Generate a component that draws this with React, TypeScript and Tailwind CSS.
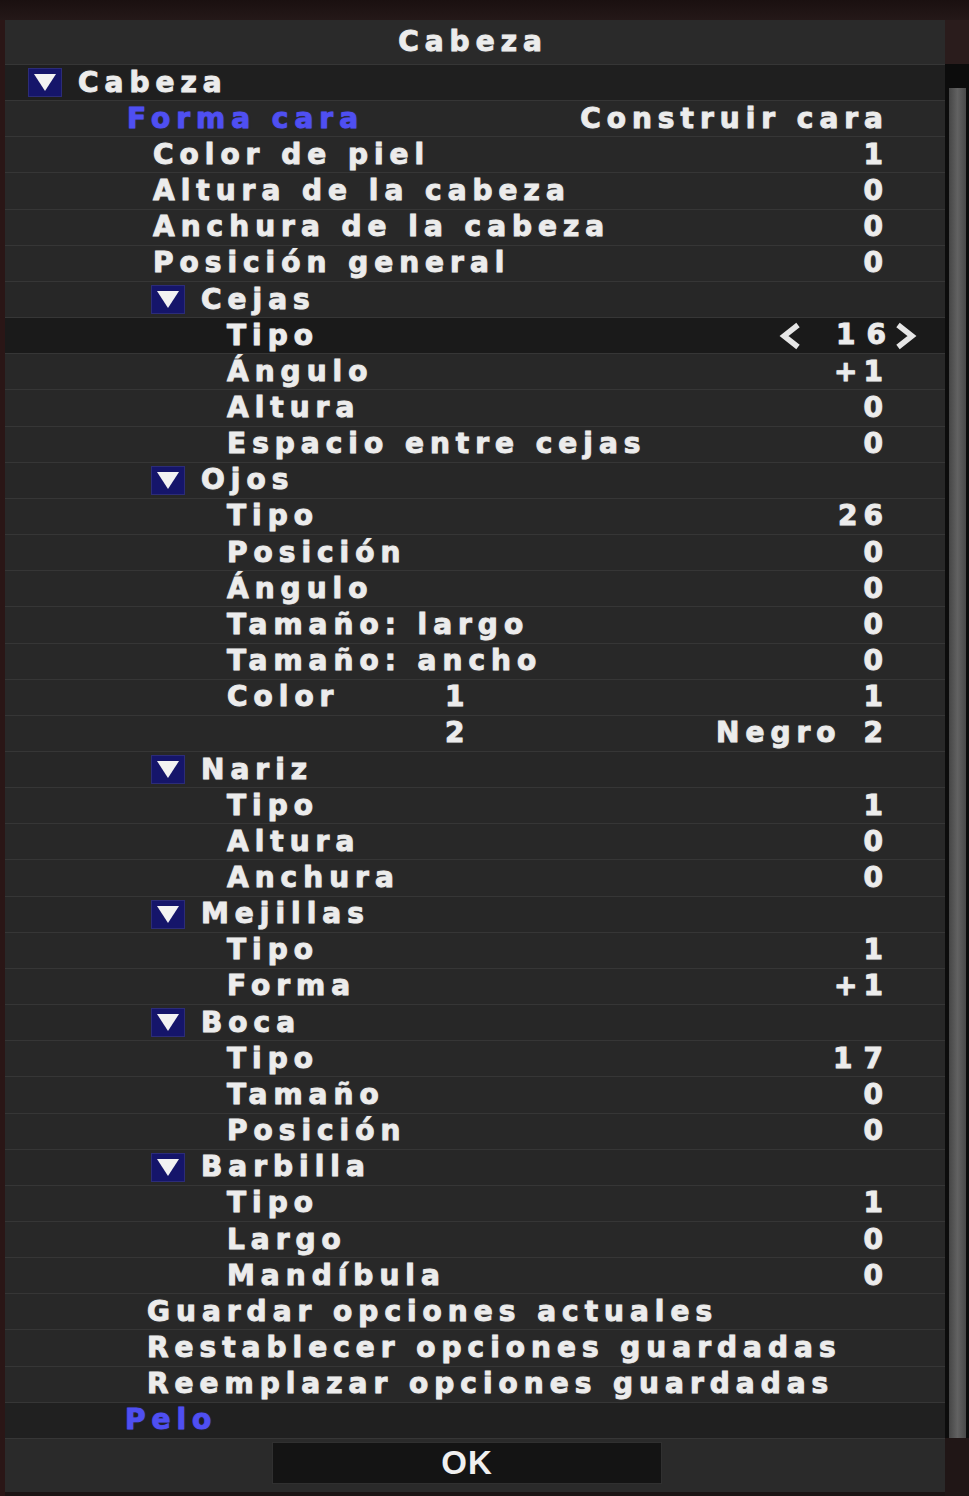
import React from "react";

type Row =
	| { kind: "head"; label: string; level: 0 | 1 }
	| { kind: "item"; label: string; value?: string; level: 1 | 2 | 3; mid?: string; dark?: boolean; arrows?: boolean }
	| { kind: "link"; label: string; right?: string; level: 0 | 1 };

const rows: Row[] = [
	{ kind: "head", label: "Cabeza", level: 0 },
	{ kind: "link", label: "Forma cara", right: "Construir cara", level: 1 },
	{ kind: "item", label: "Color de piel", value: "1", level: 1 },
	{ kind: "item", label: "Altura de la cabeza", value: "0", level: 1 },
	{ kind: "item", label: "Anchura de la cabeza", value: "0", level: 1 },
	{ kind: "item", label: "Posición general", value: "0", level: 1 },
	{ kind: "head", label: "Cejas", level: 1 },
	{ kind: "item", label: "Tipo", value: "16", level: 2, dark: true, arrows: true },
	{ kind: "item", label: "Ángulo", value: "+1", level: 2 },
	{ kind: "item", label: "Altura", value: "0", level: 2 },
	{ kind: "item", label: "Espacio entre cejas", value: "0", level: 2 },
	{ kind: "head", label: "Ojos", level: 1 },
	{ kind: "item", label: "Tipo", value: "26", level: 2 },
	{ kind: "item", label: "Posición", value: "0", level: 2 },
	{ kind: "item", label: "Ángulo", value: "0", level: 2 },
	{ kind: "item", label: "Tamaño: largo", value: "0", level: 2 },
	{ kind: "item", label: "Tamaño: ancho", value: "0", level: 2 },
	{ kind: "item", label: "Color", mid: "1", value: "1", level: 2 },
	{ kind: "item", label: "", mid: "2", value: "Negro|2", level: 2 },
	{ kind: "head", label: "Nariz", level: 1 },
	{ kind: "item", label: "Tipo", value: "1", level: 2 },
	{ kind: "item", label: "Altura", value: "0", level: 2 },
	{ kind: "item", label: "Anchura", value: "0", level: 2 },
	{ kind: "head", label: "Mejillas", level: 1 },
	{ kind: "item", label: "Tipo", value: "1", level: 2 },
	{ kind: "item", label: "Forma", value: "+1", level: 2 },
	{ kind: "head", label: "Boca", level: 1 },
	{ kind: "item", label: "Tipo", value: "17", level: 2 },
	{ kind: "item", label: "Tamaño", value: "0", level: 2 },
	{ kind: "item", label: "Posición", value: "0", level: 2 },
	{ kind: "head", label: "Barbilla", level: 1 },
	{ kind: "item", label: "Tipo", value: "1", level: 2 },
	{ kind: "item", label: "Largo", value: "0", level: 2 },
	{ kind: "item", label: "Mandíbula", value: "0", level: 2 },
	{ kind: "item", label: "Guardar opciones actuales", level: 3 },
	{ kind: "item", label: "Restablecer opciones guardadas", level: 3 },
	{ kind: "item", label: "Reemplazar opciones guardadas", level: 3 },
	{ kind: "link", label: "Pelo", level: 0 },
];

// wide game-menu lettering
const font =
	"font-['DejaVu_Sans',_'Liberation_Sans',_sans-serif] font-bold text-[28px] tracking-[6px] whitespace-pre leading-none";
const white = "text-[#ececec] [-webkit-text-stroke:0.9px_#ececec] [text-shadow:0_0_2px_rgba(255,255,255,0.35)]";
const blue = "text-[#4f4ff2] [-webkit-text-stroke:0.9px_#4f4ff2] [text-shadow:0_0_2px_rgba(80,80,255,0.5)]";

const Toggle = () => (
	<span className="flex h-[29px] w-[34px] items-center justify-center border border-[#2c2c78] bg-[#15156a]">
		<svg width="24" height="19" viewBox="0 0 24 19">
			<path d="M1 1 H23 L12 18 Z" fill="#f2f2f2" />
		</svg>
	</span>
);

const Chevron = ({ dir }: { dir: "l" | "r" }) => (
	<svg width="24" height="28" viewBox="0 0 24 28">
		<path
			d={dir === "l" ? "M20 3 L6 14 L20 25" : "M4 3 L18 14 L4 25"}
			fill="none"
			stroke="#e6e6e6"
			strokeWidth="5.5"
		/>
	</svg>
);

const Value = ({ v }: { v: string }) => {
	// the "1" in two-digit values sits at the left of a wide cell
	const wide = v.length === 2 && v[0] === "1";
	return (
		<span className={`${font} ${white} ${wide ? "tracking-[11px] -mr-[5px]" : ""}`}>{v}</span>
	);
};

const RowView = ({ row }: { row: Row }) => {
	const base = "flex h-[36.16px] items-center border-t border-[#363636]";
	if (row.kind === "head") {
		return (
			<div className={`${base} ${row.level === 0 ? "bg-[#1f1f1f] pl-[23px]" : "bg-[#272727] pl-[146px]"}`}>
				<Toggle />
				<span className={`${font} ${white} ml-[16px]`}>{row.label}</span>
			</div>
		);
	}
	if (row.kind === "link") {
		return (
			<div
				className={`${base} justify-between pr-[56px] ${
					row.level === 0 ? "bg-[#202020] pl-[120px]" : "bg-[#282828] pl-[122px]"
				}`}
			>
				<span className={`${font} ${blue}`}>{row.label}</span>
				{row.right && <span className={`${font} ${white}`}>{row.right}</span>}
			</div>
		);
	}
	const pl = row.level === 1 ? "pl-[148px]" : row.level === 2 ? "pl-[222px]" : "pl-[142px]";
	const [v1, v2] = (row.value ?? "").split("|");
	return (
		<div
			className={`${base} justify-between ${pl} ${
				row.dark ? "bg-[#1a1a1a] pr-[27px]" : "bg-[#282828] pr-[56px]"
			}`}
		>
			<div className="flex items-center">
				{row.mid !== undefined ? (
					<>
						<span className={`${font} ${white} w-[218px]`}>{row.label}</span>
						<span className={`${font} ${white}`}>{row.mid}</span>
					</>
				) : (
					<span className={`${font} ${white}`}>{row.label}</span>
				)}
			</div>
			{row.arrows ? (
				<div className="flex items-center">
					<Chevron dir="l" />
					<span className="ml-[34px]">
						<Value v={v1} />
					</span>
					<span className="ml-[2px]">
						<Chevron dir="r" />
					</span>
				</div>
			) : v2 !== undefined ? (
				<div className="flex items-center">
					<span className={`${font} ${white}`}>{v1}</span>
					<span className={`${font} ${white} ml-[22px]`}>{v2}</span>
				</div>
			) : (
				<Value v={v1} />
			)}
		</div>
	);
};

export default function App() {
	return (
		<div className="flex h-[1496px] w-[969px] flex-col bg-[#1c1414]">
			<div className="h-[20px] bg-gradient-to-b from-[#1a1010] to-[#241818]" />
			<div className="flex flex-1">
				<div className="w-[5px] bg-[#2a1616]" />
				<div className="flex w-[940px] flex-col">
					<div className="flex h-[44px] items-center justify-center bg-[#2a2a2a] pr-[4px]">
						<span className={`${font} ${white}`}>Cabeza</span>
					</div>
					{rows.map((row, i) => (
						<RowView key={i} row={row} />
					))}
					<div className="flex h-[54px] items-start justify-center border-t border-[#363636] bg-[#2a2a2a] pr-[16px] pt-[3px]">
						<button className="flex h-[42px] w-[390px] items-center justify-center border border-[#303030] bg-[#141414] font-['Liberation_Sans',_Arial,_sans-serif] text-[33px] font-bold tracking-[1px] text-[#f0f0f0]">
							OK
						</button>
					</div>
				</div>
				<div className="flex w-[24px] flex-col">
					<div className="h-[44px] bg-[#2a1c1c]" />
					<div className="flex h-[1374px] bg-[#0c0c0c] pl-[4px]">
						<div className="mt-[24px] w-[17px] bg-gradient-to-r from-[#464646] via-[#626262] to-[#4a4a4a]" />
					</div>
					<div className="flex-1 bg-[#201616]" />
				</div>
			</div>
		</div>
	);
}
